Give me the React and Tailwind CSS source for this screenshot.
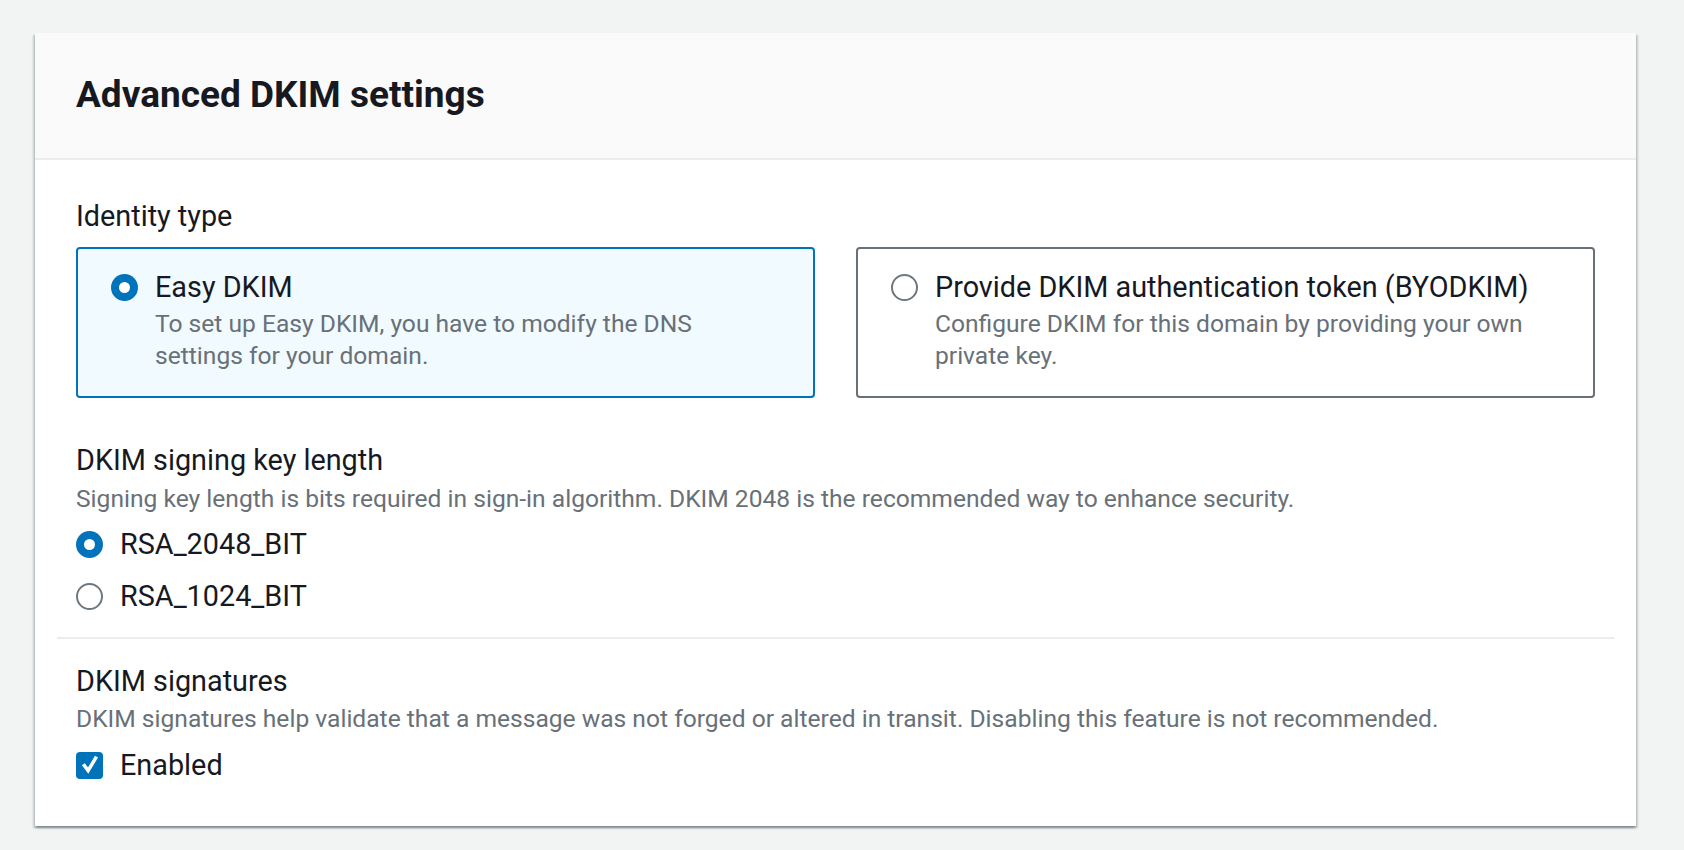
import React, { useState } from 'react';

function Radio({ checked }) {
  if (checked) {
    return (
      <span className="flex h-[27px] w-[27px] shrink-0 items-center justify-center rounded-full bg-[#0073bb]">
        <span className="h-[11px] w-[11px] rounded-full bg-white"></span>
      </span>
    );
  }
  return <span className="block h-[27px] w-[27px] shrink-0 rounded-full border-2 border-[#6f777f] bg-white"></span>;
}

function Tile({ checked, label, desc, onClick }) {
  return (
    <div
      onClick={onClick}
      className={
        'flex-1 cursor-pointer rounded-[4px] border-2 pl-[33px] pr-[24px] pt-[18px] pb-[24px] ' +
        (checked ? 'border-[#0073bb] bg-[#f1faff]' : 'border-[#687078] bg-white')
      }
    >
      <div className="flex items-start gap-[17px]">
        <div className="flex h-[40px] items-center">
          <Radio checked={checked} />
        </div>
        <div>
          <div className="text-[28.8px] leading-[40px] text-[#16191f]">{label}</div>
          <div className="mt-[1px] text-[24.6px] leading-[32px] text-[#687078]">{desc}</div>
        </div>
      </div>
    </div>
  );
}

function RadioRow({ checked, label, onClick }) {
  return (
    <div onClick={onClick} className="flex h-[40px] cursor-pointer items-center gap-[17px]">
      <Radio checked={checked} />
      <span className="text-[28.8px] leading-[40px] text-[#16191f]">{label}</span>
    </div>
  );
}

export default function App() {
  const [identity, setIdentity] = useState('easy');
  const [keyLength, setKeyLength] = useState('2048');
  const [enabled, setEnabled] = useState(true);

  return (
    <div
      className="min-h-screen w-full bg-[#f2f3f3] pt-[33px] pl-[35px]"
      style={{ fontFamily: 'Roboto, "Open Sans", sans-serif' }}
    >
      <div className="w-[1601px] bg-white shadow-[0_2px_2px_0_rgba(0,28,36,0.3),2px_2px_2px_0_rgba(0,28,36,0.15),-2px_2px_2px_0_rgba(0,28,36,0.15)]">
        <div className="flex h-[127px] items-center border-b-2 border-[#eaeded] bg-[#fafafa] px-[41px] pb-[2px]">
          <h2 className="text-[37px] font-bold leading-[48px] text-[#16191f]">Advanced DKIM settings</h2>
        </div>

        <div className="px-[22px] pt-[36px] pb-[41px]">
          <div className="px-[19px]">
            <div className="text-[28.8px] leading-[40px] text-[#16191f]">Identity type</div>
            <div className="mt-[11px] flex gap-[41px]">
              <Tile
                checked={identity === 'easy'}
                onClick={() => setIdentity('easy')}
                label="Easy DKIM"
                desc={
                  <>
                    To set up Easy DKIM, you have to modify the DNS
                    <br />
                    settings for your domain.
                  </>
                }
              />
              <Tile
                checked={identity === 'byo'}
                onClick={() => setIdentity('byo')}
                label="Provide DKIM authentication token (BYODKIM)"
                desc={
                  <>
                    Configure DKIM for this domain by providing your own
                    <br />
                    private key.
                  </>
                }
              />
            </div>

            <div className="mt-[42px] text-[28.8px] leading-[40px] text-[#16191f]">DKIM signing key length</div>
            <div className="mt-[3px] text-[24.6px] leading-[32px] text-[#687078]">
              Signing key length is bits required in sign-in algorithm. DKIM 2048 is the recommended way to enhance security.
            </div>
            <div className="mt-[9px] flex flex-col gap-[12px]">
              <RadioRow checked={keyLength === '2048'} onClick={() => setKeyLength('2048')} label="RSA_2048_BIT" />
              <RadioRow checked={keyLength === '1024'} onClick={() => setKeyLength('1024')} label="RSA_1024_BIT" />
            </div>
          </div>

          <div className="mt-[21px] h-[2px] bg-[#eaeded]"></div>

          <div className="px-[19px] pt-[22px]">
            <div className="text-[28.8px] leading-[40px] text-[#16191f]">DKIM signatures</div>
            <div className="mt-[2px] text-[24.6px] leading-[32px] text-[#687078]">
              DKIM signatures help validate that a message was not forged or altered in transit. Disabling this feature is not recommended.
            </div>
            <div onClick={() => setEnabled(!enabled)} className="mt-[10px] flex h-[40px] cursor-pointer items-center gap-[17px]">
              {enabled ? (
                <span className="flex h-[27px] w-[27px] items-center justify-center rounded-[4px] bg-[#0073bb]">
                  <svg width="20" height="20" viewBox="0 0 16 16" fill="none">
                    <path d="M3.5 8.5l3 4 6-10" stroke="white" strokeWidth="2.8" strokeLinecap="square" strokeLinejoin="miter" />
                  </svg>
                </span>
              ) : (
                <span className="block h-[27px] w-[27px] rounded-[4px] border-2 border-[#687078]"></span>
              )}
              <span className="text-[28.8px] leading-[40px] text-[#16191f]">Enabled</span>
            </div>
          </div>
        </div>
      </div>
    </div>
  );
}
